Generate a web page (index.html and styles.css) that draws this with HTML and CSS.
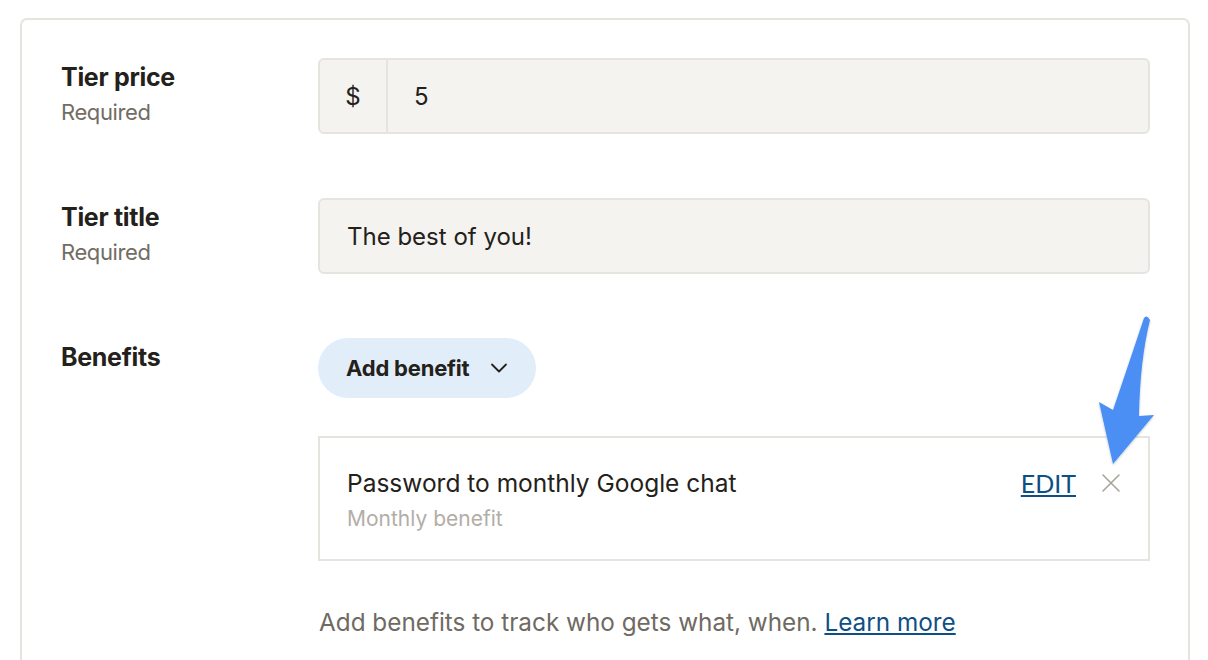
FILE: index.html
```html
<!DOCTYPE html>
<html lang="en">
<head>
<meta charset="UTF-8">
<meta name="viewport" content="width=device-width, initial-scale=1.0">
<title>Edit tier</title>
<link rel="stylesheet" href="styles.css">
</head>
<body>

<div class="card">
  <!-- Price -->
  <div class="row">
    <div class="label">
      <div class="label-title">Tier price</div>
      <div class="label-hint">Required</div>
    </div>
    <div class="field">
      <div class="input input-price">
        <span class="prefix">$</span>
        <span class="value">5</span>
      </div>
    </div>
  </div>

  <!-- Title -->
  <div class="row">
    <div class="label">
      <div class="label-title">Tier title</div>
      <div class="label-hint">Required</div>
    </div>
    <div class="field">
      <div class="input">
        <span class="value">The best of you!</span>
      </div>
    </div>
  </div>

  <!-- Benefits -->
  <div class="row">
    <div class="label">
      <div class="label-title">Benefits</div>
    </div>
    <div class="field">
      <button class="add-btn" type="button">
        Add benefit
        <svg width="18" height="18" viewBox="0 0 18 18" fill="none" stroke="#24211a" stroke-width="1.8" stroke-linecap="round" stroke-linejoin="round"><path d="M2 5.5l7 7 7-7"/></svg>
      </button>

      <div class="benefit">
        <div class="benefit-text">
          <div class="benefit-title">Password to monthly Google chat</div>
          <div class="benefit-sub">Monthly benefit</div>
        </div>
        <a class="edit-link" href="#">EDIT</a>
        <svg class="close" width="20" height="20" viewBox="0 0 20 20" fill="none" stroke="#a8a39b" stroke-width="1.6" stroke-linecap="round"><path d="M2 2l16 16M18 2L2 18"/></svg>
      </div>

      <p class="help">Add benefits to track who gets what, when. <a href="#">Learn more</a></p>
    </div>
  </div>
</div>

<!-- annotation arrow -->
<svg class="arrow" width="1208" height="660" viewBox="0 0 1208 660">
  <defs>
    <filter id="sh" x="-20%" y="-20%" width="140%" height="140%">
      <feDropShadow dx="0" dy="1" stdDeviation="1" flood-color="#000" flood-opacity="0.25"/>
    </filter>
  </defs>
  <path filter="url(#sh)" fill="#4b8ff5" d="M1144,318 Q1147,314 1150,320 Q1140,360 1139,416 L1154,415 L1113,464 L1099,402 L1113,410 Q1130,360 1144,318 Z"/>
</svg>

</body>
</html>
```

FILE: styles.css
```css
body {
  margin: 0;
  background: #fff;
  font-family: Inter, "Noto Sans", sans-serif;
  color: #24211a;
}
.card {
  margin: 18px 0 0 20px;
  width: 1170px;
  min-height: 700px;
  box-sizing: border-box;
  border: 2px solid #e6e4df;
  border-radius: 7px;
  padding: 38px 38px 0 39px;
  display: flex;
  flex-direction: column;
  gap: 64px;
}
.row {
  display: grid;
  grid-template-columns: 257px 1fr;
}
.label {
  padding-top: 2px;
}
.label-title {
  font-size: 25px;
  font-weight: 700;
  letter-spacing: -0.3px;
  line-height: 34px;
}
.label-hint {
  font-size: 22px;
  letter-spacing: -0.4px;
  color: #726d64;
  line-height: 36px;
}
.input {
  height: 76px;
  box-sizing: border-box;
  background: #f4f3f0;
  border: 2px solid #e6e4df;
  border-radius: 6px;
  display: flex;
  align-items: center;
  font-size: 24px;
  padding-left: 27px;
}
.input-price {
  padding-left: 0;
}
.prefix {
  width: 66px;
  height: 100%;
  border-right: 2px solid #e6e4df;
  display: flex;
  align-items: center;
  justify-content: center;
}
.input-price .value {
  padding-left: 26px;
}
.add-btn {
  height: 60px;
  padding: 0 28px 0 28px;
  border: none;
  border-radius: 30px;
  background: #e1eefa;
  font-family: inherit;
  font-size: 22px;
  font-weight: 700;
  letter-spacing: -0.2px;
  color: #24211a;
  display: flex;
  align-items: center;
  gap: 21px;
}
.benefit {
  margin-top: 38px;
  height: 125px;
  box-sizing: border-box;
  border: 2px solid #e6e4df;
  display: flex;
  align-items: center;
  padding: 0 27px 0 27px;
}
.benefit-text {
  flex: 1;
  margin-top: 7px;
}
.benefit-title {
  font-size: 24.5px;
  line-height: 34px;
}
.benefit-sub {
  font-size: 21px;
  line-height: 38px;
  color: #b2aea6;
}
.edit-link {
  font-family: Lato, sans-serif;
  font-size: 25px;
  color: #0e4f85;
  margin-right: 25px;
  margin-top: -32px;
}
.close {
  margin-top: -32px;
}
.help {
  margin: 46px 0 0 1px;
  font-size: 24.3px;
  color: #6f6a62;
}
.help a {
  color: #0e4f85;
}
.arrow {
  position: absolute;
  left: 0;
  top: 0;
  pointer-events: none;
}
```
